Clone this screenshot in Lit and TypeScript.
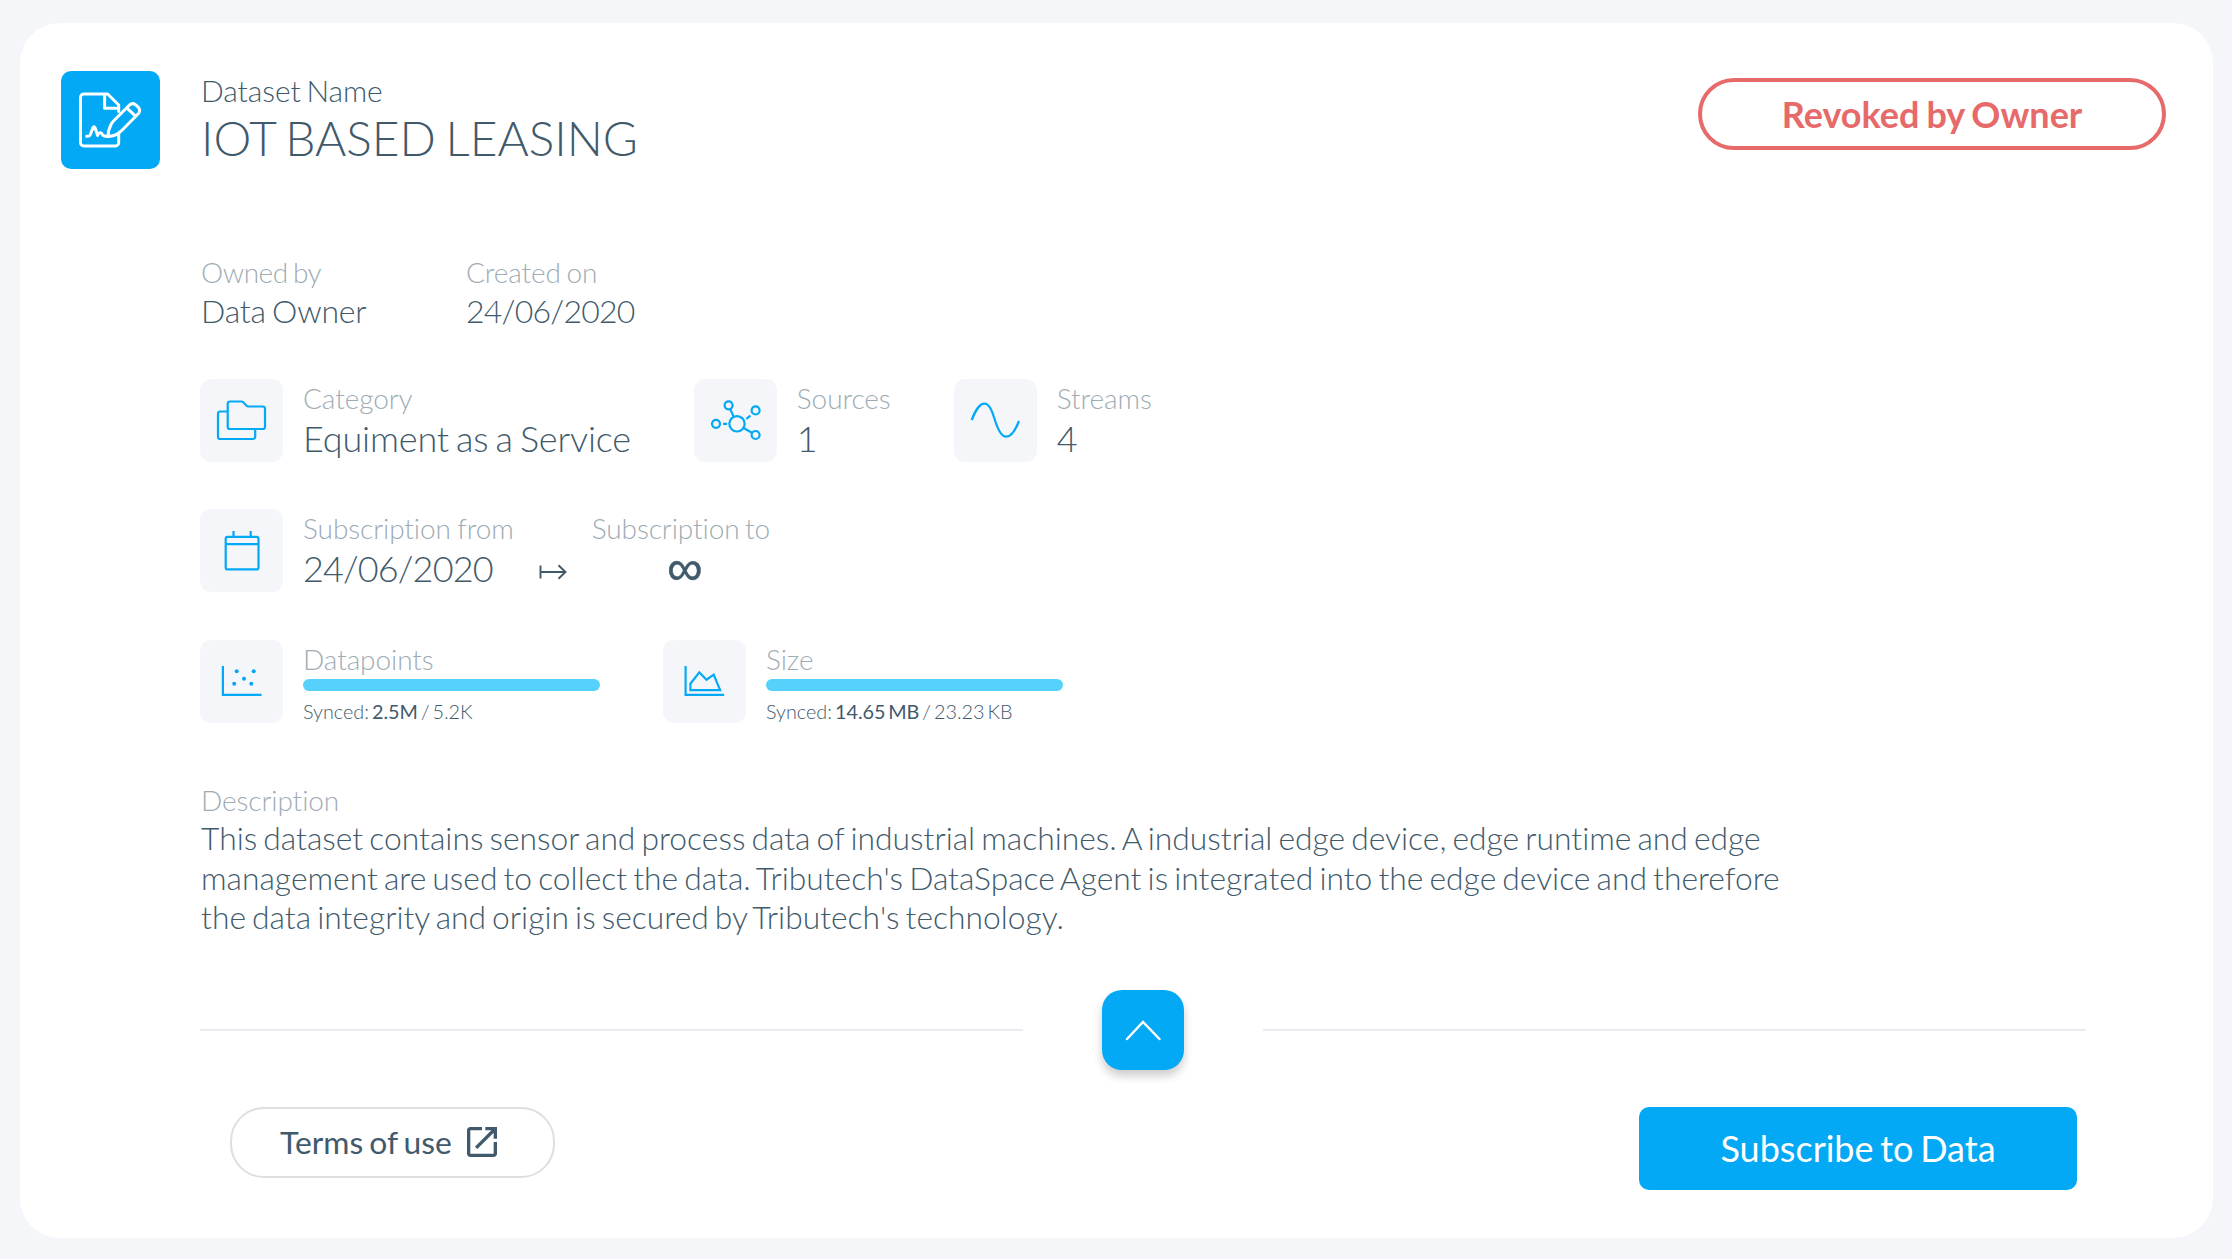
import { LitElement, html, css, svg, SVGTemplateResult } from "lit";
import { customElement } from "lit/decorators.js";

const icons: Record<string, SVGTemplateResult> = {
  folders: svg`<path d="M27.7 32.5h-7.4a2.3 2.3 0 0 0-2.3 2.3v22.9a2.3 2.3 0 0 0 2.3 2.3h32.6a2.3 2.3 0 0 0 2.3-2.3V50"/>
    <path d="M30 22.5h11.6q.9 0 1.6.7l3.4 3.5q.8.8 1.7.8h14.4a2.3 2.3 0 0 1 2.3 2.3v17.9a2.3 2.3 0 0 1-2.3 2.3H30a2.3 2.3 0 0 1-2.3-2.3V24.8a2.3 2.3 0 0 1 2.3-2.3z"/>`,
  sources: svg`<circle cx="43" cy="44.8" r="7.7"/><circle cx="34.6" cy="26.3" r="4"/><circle cx="61.6" cy="31.4" r="4"/>
    <circle cx="22" cy="44.8" r="4"/><circle cx="61.6" cy="56" r="4"/>
    <path d="M36.3 30.2l3.3 7.4M52.3 39.8l4.2-3.2M29 44.8h4.2M50 49.2l8 4.6"/>`,
  wave: svg`<path d="M17.7 41C21 32 26 24.7 30.3 24.7C36 24.7 38.4 33 41.2 42C44.4 52 47.4 57.7 52.2 57.7C57.4 57.7 61.6 51 65 42"/>`,
  calendar: svg`<rect x="25.7" y="27.8" width="32.8" height="32.6" rx="2"/><path d="M25.7 35.2h32.8M33.5 22v5.5M50.7 22v5.5"/>`,
  scatter: svg`<path d="M22.9 26v28.8h38.6"/><g fill="currentColor" stroke="none"><circle cx="36.7" cy="31.3" r="2"/><circle cx="53.7" cy="31.3" r="2"/>
    <circle cx="44" cy="38.7" r="2"/><circle cx="34.2" cy="43.7" r="2"/><circle cx="51.3" cy="43.7" r="2"/></g>`,
  area: svg`<path d="M22.6 26v28.8h38.6M27.4 50.1v-6.4l8.9-11.4 7.2 7.4 7.2-5 6.4 15.4z"/>`,
};

@customElement("data-tile")
export class DataTile extends LitElement {
  static properties = { icon: {}, label: {} };
  declare icon: string;
  declare label: string;
  static styles = css`
    :host { display: flex; gap: 20px; height: 83px; }
    .box { flex: none; width: 83px; height: 83px; border-radius: 11px; background: #f4f6fa; color: #03a9f4; }
    .box svg { display: block; width: 83px; height: 83px; fill: none; stroke: currentColor; stroke-width: 2.2; }
    .label { font-size: 28px; line-height: 39px; letter-spacing: -.08px; color: #a0acb5; white-space: nowrap; }
  `;
  render() {
    return html`<div class="box"><svg viewBox="0 0 83 83">${icons[this.icon]}</svg></div>
      <div><div class="label">${this.label}</div><slot></slot></div>`;
  }
}

@customElement("app-root")
export class AppRoot extends LitElement {
  static styles = css`
    :host { display: block; box-sizing: border-box; height: 1259px; padding: 23px 19px 21px 20px; background: #f4f6fa;
      font-family: Lato, "Open Sans", sans-serif; font-weight: 300; font-variant-ligatures: none; color: #415a6b; }
    .card { box-sizing: border-box; height: 1215px; border-radius: 40px; background: #fff; padding: 47px 47px 0 41px; word-spacing: -.07em; }
    .kicker, .title, .label, .meta, .value, .text { word-spacing: -.07em; }
    .kicker, .title, .label, .meta, .text { padding-left: 1px; }
    .header { display: flex; height: 99px; }
    .logo { flex: none; width: 99px; height: 98px; margin-top: 1px; border-radius: 10px; background: #03a9f4; }
    .logo svg { display: block; width: 99px; height: 98px; fill: none; stroke: #fff; stroke-width: 3; stroke-linecap: round; stroke-linejoin: round; }
    .heading { flex: 1; margin-left: 40px; }
    .kicker { font-size: 30px; line-height: 41px; letter-spacing: -.08px; }
    .title { font-size: 47.8px; line-height: 54px; }
    .status { box-sizing: border-box; width: 468px; height: 72px; margin-top: 8px; border: 4px solid #e66a6a; border-radius: 36px;
      color: #e66a6a; font-size: 36px; font-weight: 700; line-height: 64px; text-align: center; word-spacing: -.05em; }
    .body { margin: 83px 80px 0 139px; }
    .row { display: flex; }
    .label { font-size: 28px; line-height: 40px; letter-spacing: -.08px; color: #a0acb5; white-space: nowrap; }
    .meta { font-size: 32px; line-height: 38px; letter-spacing: -.2px; white-space: nowrap; }
    .owner { width: 265px; }
    .owner .label { letter-spacing: -.45px; }
    .tiles { gap: 63px; margin-top: 49px; }
    .period { margin-top: 47px; }
    .usage { margin-top: 48px; }
    .value { font-size: 36px; line-height: 40px; letter-spacing: -.16px; white-space: nowrap; }
    .date { letter-spacing: -.024em; }
    .range { display: flex; }
    .range svg { width: 28px; height: 18px; margin: 15px 0 0 46px; fill: none; stroke: #415a6b; stroke-width: 1.9; }
    .until { margin-left: 24px; }
    .until .label { line-height: 39px; }
    .forever { padding-left: 9px; font: 50px/41px "Liberation Sans", sans-serif; text-align: center; -webkit-text-stroke: .5px currentColor; }
    .bar { width: 297px; height: 12px; border-radius: 6px; background: #e5e9ee; overflow: hidden; }
    .fill { height: 12px; background: #55d1fc; }
    .sync { margin-top: 8px; font-size: 19.8px; line-height: 24px; word-spacing: -.12em; white-space: nowrap; }
    .sync b { font-weight: 400; }
    .desc { margin-top: 57px; }
    .text { width: 1600px; margin: -1px 0 1px; font-size: 31.8px; line-height: 39.5px; word-spacing: -.08em; }
    .divider { display: grid; grid-template-columns: 1fr 82px 1fr; column-gap: 79px; align-items: center; margin-top: 52px; height: 80px; }
    .line { height: 2px; background: #ebebf2; }
    .toggle { height: 80px; border-radius: 20px; background: #03a9f4; box-shadow: 0 6px 10px rgba(0, 0, 0, .2); }
    .toggle svg { display: block; width: 82px; height: 80px; fill: none; stroke: #fff; stroke-width: 2.5; stroke-linecap: round; }
    .actions { display: flex; justify-content: space-between; align-items: flex-start; margin: 37px 9px 0 30px; }
    .terms { box-sizing: border-box; display: flex; align-items: center; width: 325px; height: 71px; padding-left: 48px;
      border: 2px solid #dfdfdf; border-radius: 34px; font-size: 31.8px; font-weight: 400; word-spacing: -.065em; }
    .terms svg { width: 40px; height: 40px; margin-left: 10px; fill: #415a6b; }
    .subscribe { width: 438px; height: 83px; border-radius: 10px; background: #03a9f4; color: #fff; font-size: 36px; font-weight: 400;
      line-height: 83px; text-align: center; word-spacing: -.07em; }
  `;

  private usage(icon: string, label: string, synced: string, total: string, percent: number) {
    return html`<data-tile icon=${icon} label=${label}>
      <div class="bar"><div class="fill" style="width:${percent}%"></div></div>
      <div class="sync">Synced: <b>${synced}</b> / ${total}</div>
    </data-tile>`;
  }

  render() {
    return html`<div class="card">
      <div class="header">
        <div class="logo"><svg viewBox="0 .5 99 98">
          <path d="M57.7 62.5v9.8a3.2 3.2 0 0 1-3.2 3.2H22.7a3.2 3.2 0 0 1-3.2-3.2V26.7a3.2 3.2 0 0 1 3.2-3.2h24L57.7 34.5v6.5M43.6 24v13.8h14"/>
          <path d="M47 66q0-6.5 3.3-12.5 1.2-2 2.7-3.5L68.5 34.5q3.3-2.8 6.8.3l1.6 1.6q3.3 3.4.6 6.6L62 58.8q-2.3 2.3-5 4.2-4.5 3-10 3zM66.3 37.8l7.7 7.4"/>
          <path d="M25.7 65.7q2.8.6 3.6-1.4l2.6-7q1.1-2 2.2 0l2.5 7.7q1.2-2.8 2.7-2.7 1.5.1 2 1.6.8 2 5.7 2.1"/>
        </svg></div>
        <div class="heading">
          <div class="kicker">Dataset Name</div>
          <div class="title">IOT BASED LEASING</div>
        </div>
        <div class="status">Revoked by Owner</div>
      </div>
      <div class="body">
        <div class="row">
          <div class="owner"><div class="label">Owned by</div><div class="meta">Data Owner</div></div>
          <div><div class="label">Created on</div><div class="meta date">24/06/2020</div></div>
        </div>
        <div class="row tiles">
          <data-tile icon="folders" label="Category"><div class="value">Equiment as a Service</div></data-tile>
          <data-tile icon="sources" label="Sources"><div class="value">1</div></data-tile>
          <data-tile icon="wave" label="Streams"><div class="value">4</div></data-tile>
        </div>
        <div class="row period">
          <data-tile icon="calendar" label="Subscription from">
            <div class="range"><div class="value date">24/06/2020</div>
              <svg viewBox="0 0 28 18"><path d="M1.5 2.5v13M1.5 9h25M19.5 2.2L26.5 9l-7 6.8"/></svg></div>
          </data-tile>
          <div class="until"><div class="label">Subscription to</div><div class="forever">∞</div></div>
        </div>
        <div class="row tiles usage">
          ${this.usage("scatter", "Datapoints", "2.5M", "5.2K", 100)}
          ${this.usage("area", "Size", "14.65 MB", "23.23 KB", 100)}
        </div>
        <div class="desc">
          <div class="label">Description</div>
          <div class="text">This dataset contains sensor and process data of industrial machines. A industrial edge device, edge runtime and edge management are used to collect the data. Tributech's DataSpace Agent is integrated into the edge device and therefore the data integrity and origin is secured by Tributech's technology.</div>
        </div>
        <div class="divider">
          <div class="line"></div>
          <div class="toggle"><svg viewBox="0 0 82 80"><path d="M25 49L41 32L57.5 49"/></svg></div>
          <div class="line"></div>
        </div>
        <div class="actions">
          <div class="terms">Terms of use<svg viewBox="0 0 24 24"><path d="M19 19H5V5h7V3H5c-1.11 0-2 .9-2 2v14c0 1.1.89 2 2 2h14c1.1 0 2-.9 2-2v-7h-2v7zM14 3v2h3.59l-9.83 9.83 1.41 1.41L19 6.41V10h2V3h-7z"/></svg></div>
          <div class="subscribe">Subscribe to Data</div>
        </div>
      </div>
    </div>`;
  }
}
